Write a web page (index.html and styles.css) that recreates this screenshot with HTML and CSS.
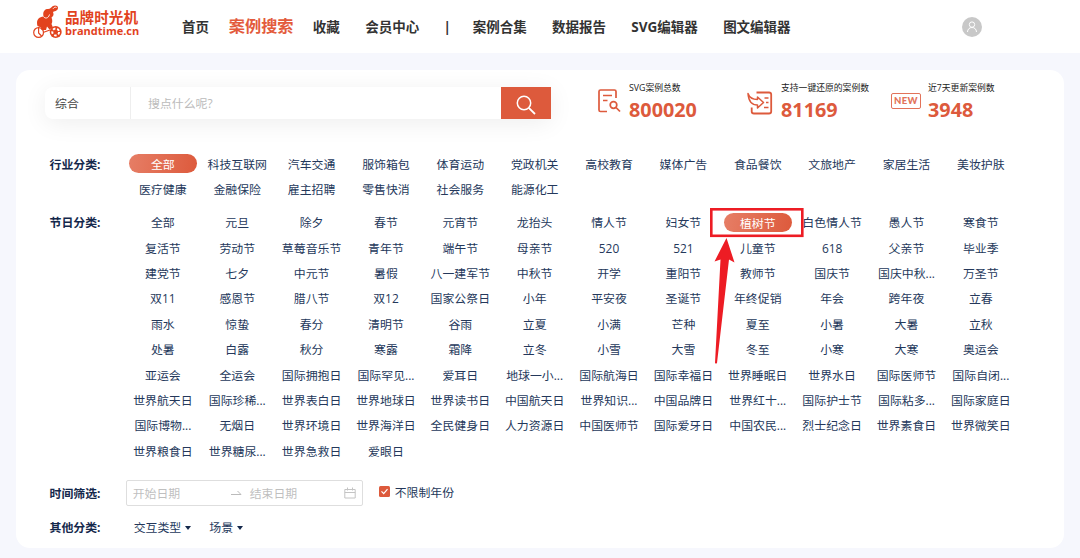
FILE: index.html
```
<!DOCTYPE html>
<html lang="zh-CN">
<head>
  <meta charset="UTF-8">
  <meta name="viewport" content="width=device-width, initial-scale=1.0">
  <title>品牌时光机 - 案例搜索</title>
  <link rel="stylesheet" href="styles.css">
</head>
<body>
  <header class="header">
    <div class="logo">
      <svg class="logo-icon" width="30" height="34" viewBox="0 0 30 34">
        <path d="M4.500 21C3 16 5 12 10.500 11.500C9.500 7 11.500 4 15 4C17.500 4 18 2.500 19.500 1.300C21.500 -.3 25 .2 25 2.800C25 5.500 22.500 6 20 7C21 9.500 20.500 11.500 18.500 12.500C19.500 15 19.500 17 18.500 19L20 22.500L16.500 24.500L14 21.500L13 25H8.500L8 22.500Z" fill="#e2431e"/>
        <path d="M10.500 11.500C12 14 15.500 13.500 16.500 9.500M20 3.800C21 2.300 22.500 1.800 23.500 2.500" fill="none" stroke="#fff" stroke-width=".9"/>
        <circle cx="5.600" cy="27.500" r="4.900" fill="none" stroke="#e2431e" stroke-width="1.200"/>
        <path d="M5.600 22V28L8.500 31M10 27.500L17 25" fill="none" stroke="#e2431e" stroke-width="1.200"/>
        <circle cx="22.700" cy="27" r="6" fill="#e2431e"/>
        <circle cx="22.700" cy="27" r="3.400" fill="none" stroke="#fff" stroke-width="2" stroke-dasharray="2.500 1.770"/>
      </svg>
      <div class="logo-text">
        <span class="logo-cn">品牌时光机</span>
        <span class="logo-en">brandtime.cn</span>
      </div>
    </div>
    <nav class="nav">
      <a>首页</a>
      <a class="active">案例搜索</a>
      <a>收藏</a>
      <a>会员中心</a>
      <a class="split">|</a>
      <a>案例合集</a>
      <a>数据报告</a>
      <a>SVG编辑器</a>
      <a>图文编辑器</a>
    </nav>
    <svg class="avatar" width="20" height="20" viewBox="0 0 20 20">
      <circle cx="10" cy="10" r="10" fill="#c8c8c8"/>
      <circle cx="10" cy="7.600" r="2.700" fill="none" stroke="#fff"/>
      <path d="M5.500 15C5.700 12 7.500 10.500 10 10.500S14.300 12 14.500 15" fill="none" stroke="#fff"/>
    </svg>
  </header>

  <main class="panel">
    <div class="top">
      <div class="search">
        <div class="search-type">综合</div>
        <div class="search-input">搜点什么呢?</div>
        <div class="search-btn">
          <svg width="20" height="20" viewBox="0 0 20 20" fill="none" stroke="#fff" stroke-width="1.500">
            <circle cx="8" cy="8" r="6.700"/>
            <path d="M12.800 12.800L19 19" stroke-width="1.800"/>
          </svg>
        </div>
      </div>
      <div class="stat stat-total">
        <svg width="23" height="24" viewBox="0 0 23 24" fill="none" stroke="#dd5a3c" stroke-width="1.700">
          <path d="M9 22.500H2.500Q1 22.500 1 21V2.500Q1 1 2.500 1H16.500Q18 1 18 2.500V9M5 6.500H14M5 11.500H9.500"/>
          <circle cx="15.500" cy="16" r="3.300"/>
          <path d="M18 18.500L22 22.500"/>
        </svg>
        <div>
          <div class="stat-name">SVG案例总数</div>
          <div class="stat-num">800020</div>
        </div>
      </div>
      <div class="stat stat-restore">
        <svg width="26" height="24" viewBox="0 0 26 24" fill="none" stroke="#dd5a3c" stroke-width="1.800">
          <path d="M9.500 1.500H22Q24.200 1.500 24.200 3.500V20.500Q24.200 22.500 22 22.500H7Q4.700 22.500 4.700 20.500V16.500"/>
          <path d="M1 2.500C2.500 7 5.500 8.500 10.500 8.500V6L16.500 11.500L10.500 17V14C5 14 1.500 10 1 2.500Z" stroke-width="1.500" stroke-linejoin="round"/>
          <path d="M17.500 7H21.500M19 11.500H21.500M17 16.500H21.500" stroke-width="1.400"/>
        </svg>
        <div>
          <div class="stat-name">支持一键还原的案例数</div>
          <div class="stat-num">81169</div>
        </div>
      </div>
      <div class="stat stat-week">
        <div class="new-icon">NEW</div>
        <div>
          <div class="stat-name">近7天更新案例数</div>
          <div class="stat-num">3948</div>
        </div>
      </div>
    </div>

    <div class="row row-industry">
      <div class="label">行业分类:</div>
      <div class="tags">
        <span class="on">全部</span><span>科技互联网</span><span>汽车交通</span><span>服饰箱包</span><span>体育运动</span><span>党政机关</span><span>高校教育</span><span>媒体广告</span><span>食品餐饮</span><span>文旅地产</span><span>家居生活</span><span>美妆护肤</span>
        <span>医疗健康</span><span>金融保险</span><span>雇主招聘</span><span>零售快消</span><span>社会服务</span><span>能源化工</span>
      </div>
    </div>

    <div class="row row-festival">
      <div class="label">节日分类:</div>
      <div class="tags">
        <span>全部</span><span>元旦</span><span>除夕</span><span>春节</span><span>元宵节</span><span>龙抬头</span><span>情人节</span><span>妇女节</span><span class="on">植树节</span><span>白色情人节</span><span>愚人节</span><span>寒食节</span>
        <span>复活节</span><span>劳动节</span><span>草莓音乐节</span><span>青年节</span><span>端午节</span><span>母亲节</span><span>520</span><span>521</span><span>儿童节</span><span>618</span><span>父亲节</span><span>毕业季</span>
        <span>建党节</span><span>七夕</span><span>中元节</span><span>暑假</span><span>八一建军节</span><span>中秋节</span><span>开学</span><span>重阳节</span><span>教师节</span><span>国庆节</span><span>国庆中秋...</span><span>万圣节</span>
        <span>双11</span><span>感恩节</span><span>腊八节</span><span>双12</span><span>国家公祭日</span><span>小年</span><span>平安夜</span><span>圣诞节</span><span>年终促销</span><span>年会</span><span>跨年夜</span><span>立春</span>
        <span>雨水</span><span>惊蛰</span><span>春分</span><span>清明节</span><span>谷雨</span><span>立夏</span><span>小满</span><span>芒种</span><span>夏至</span><span>小暑</span><span>大暑</span><span>立秋</span>
        <span>处暑</span><span>白露</span><span>秋分</span><span>寒露</span><span>霜降</span><span>立冬</span><span>小雪</span><span>大雪</span><span>冬至</span><span>小寒</span><span>大寒</span><span>奥运会</span>
        <span>亚运会</span><span>全运会</span><span>国际拥抱日</span><span>国际罕见...</span><span>爱耳日</span><span>地球一小...</span><span>国际航海日</span><span>国际幸福日</span><span>世界睡眠日</span><span>世界水日</span><span>国际医师节</span><span>国际自闭...</span>
        <span>世界航天日</span><span>国际珍稀...</span><span>世界表白日</span><span>世界地球日</span><span>世界读书日</span><span>中国航天日</span><span>世界知识...</span><span>中国品牌日</span><span>世界红十...</span><span>国际护士节</span><span>国际粘多...</span><span>国际家庭日</span>
        <span>国际博物...</span><span>无烟日</span><span>世界环境日</span><span>世界海洋日</span><span>全民健身日</span><span>人力资源日</span><span>中国医师节</span><span>国际爱牙日</span><span>中国农民...</span><span>烈士纪念日</span><span>世界素食日</span><span>世界微笑日</span>
        <span>世界粮食日</span><span>世界糖尿...</span><span>世界急救日</span><span>爱眼日</span>
      </div>
    </div>

    <div class="row row-time">
      <div class="label">时间筛选:</div>
      <div class="date-range">
        <span class="date-start">开始日期</span>
        <svg class="date-arrow" width="11" height="6" viewBox="0 0 11 6" fill="none" stroke="#bbb"><path d="M0 4.500H10L6.500 1"/></svg>
        <span class="date-end">结束日期</span>
        <svg width="12" height="12" viewBox="0 0 12 12" fill="none" stroke="#c4c4c4"><path d="M.8 2.500H11.200V11H.8ZM.8 5.500H11.200M3.500 .5V3.500M8.500 .5V3.500"/></svg>
      </div>
      <div class="check">
        <svg width="11" height="11" viewBox="0 0 11 11"><rect width="11" height="11" rx="1.500" fill="#dd5a3c"/><path d="M2.500 5.300L4.700 7.600L8.500 3.200" fill="none" stroke="#fff" stroke-width="1.200"/></svg>
        <span>不限制年份</span>
      </div>
    </div>

    <div class="row row-other">
      <div class="label">其他分类:</div>
      <div class="drop">交互类型<i class="caret"></i></div>
      <div class="drop">场景<i class="caret"></i></div>
    </div>
  </main>

  <!-- 植树节标注 -->
  <svg class="mark" width="96" height="158" viewBox="0 0 96 158">
    <rect x="2.300" y="2.300" width="91" height="26.500" fill="none" stroke="#ed1c24" stroke-width="2.600"/>
    <path d="M17.500 31L25.500 55.500L20 52.500L8 156Q7 157 6 156L11.500 52.500L5.500 54.500Z" fill="#ed1c24"/>
  </svg>
</body>
</html>
```

FILE: styles.css
```
body {
  margin: 0;
  height: 558px;
  overflow: hidden;
  position: relative;
  background: #f6f7fd;
  font-family: "Open Sans", "Noto Sans CJK SC", sans-serif;
  font-size: 11.9px;
  color: #24385b;
}
.header {
  height: 53px;
  box-sizing: border-box;
  padding-left: 33px;
  background: #fff;
  display: flex;
  align-items: flex-start;
}
.logo {
  display: flex;
  width: 149px;
  padding-top: 5px;
  color: #e2431e;
  font-weight: bold;
}
.logo-text {
  display: flex;
  flex-direction: column;
  padding: 5px 0 0 2px;
  white-space: nowrap;
}
.logo-cn {
  font-size: 14.6px;
  line-height: 15px;
}
.logo-en {
  font-family: "Open Sans", sans-serif;
  font-size: 11px;
  line-height: 11px;
}
.nav {
  display: flex;
  align-items: baseline;
  gap: 25.3px;
  width: 780px;
  height: 53px;
  line-height: 52px;
  font-size: 13.5px;
  font-weight: bold;
  color: #333;
  white-space: nowrap;
}
.nav .active {
  margin: 0 -6px 0 -5.5px;
  font-size: 16.2px;
  color: #e35b3c;
}
.nav .split {
  width: 3px;
  margin: 0 1px 0 -1px;
}
.avatar {
  margin-top: 17px;
}
.panel {
  box-sizing: border-box;
  width: 1048px;
  height: 478px;
  margin: 17px 0 0 16px;
  padding: 17px 0 0 29px;
  background: #fff;
  border-radius: 14px;
}
.top {
  display: flex;
  height: 64px;
}
.search {
  display: flex;
  width: 506px;
  height: 32px;
  line-height: 33px;
  border-radius: 8px 0 0 8px;
  background: #fff;
  box-shadow: 0 4px 24px rgba(0, 0, 0, 0.07);
}
.search-type {
  box-sizing: border-box;
  width: 86px;
  padding-left: 10px;
  border-right: 1px solid #eee;
  color: #444;
}
.search-input {
  flex: 1;
  padding-left: 17px;
  color: #bbb;
}
.search-btn {
  display: flex;
  align-items: center;
  justify-content: center;
  width: 50px;
  padding-top: 4px;
  box-sizing: border-box;
  background: #dd5a3c;
}
.stat {
  display: flex;
  white-space: nowrap;
}
.stat > svg {
  margin-top: 2px;
}
.stat-total {
  width: 102px;
  margin-left: 47px;
}
.stat-total > svg {
  margin-right: 8px;
}
.stat-total > div,
.stat-restore > div,
.stat-week > div {
  flex-shrink: 0;
}
.stat-restore {
  width: 144px;
  margin-left: 47px;
}
.stat-restore > svg {
  margin: 4px 8px 0 0;
}
.stat-name {
  margin-top: -5px;
  height: 12px;
  line-height: 12px;
  font-size: 8.8px;
  color: #222;
}
.stat-num {
  font-family: "Noto Sans", sans-serif;
  font-size: 19.8px;
  line-height: 32px;
  font-weight: bold;
  color: #dd5a3c;
}
.new-icon {
  box-sizing: border-box;
  width: 30px;
  height: 16px;
  margin: 6px 7px 0 0;
  border: 1.5px solid #e2735a;
  border-radius: 2px;
  font-family: "Lato", sans-serif;
  font-size: 9.5px;
  line-height: 14px;
  font-weight: 900;
  letter-spacing: 0.4px;
  text-align: center;
  color: #e2735a;
}
.row {
  display: flex;
  padding-left: 5px;
  line-height: 25.4px;
}
.row-industry {
  height: 59.3px;
  line-height: 26px;
}
.row-festival {
  height: 268.7px;
}
.label {
  width: 76.2px;
  margin-left: -0.5px;
  font-weight: bold;
  color: #14284b;
}
.tags {
  display: grid;
  grid-template-columns: repeat(12, 74.36px);
  grid-auto-rows: 25.4px;
  justify-items: center;
  text-align: center;
  white-space: nowrap;
}
.tags .on {
  width: 68px;
  height: 19px;
  margin-top: 3px;
  line-height: 20px;
  border-radius: 10px;
  background: linear-gradient(100deg, #e67e66, #dd5a3c);
  color: #fff;
}
.row-time {
  height: 35px;
  padding-top: 1px;
  line-height: 26px;
}
.date-range {
  display: flex;
  align-items: center;
  box-sizing: border-box;
  width: 237px;
  height: 26px;
  padding-left: 6px;
  border: 1px solid #dedede;
  border-radius: 2px;
  color: #bfbfbf;
}
.date-start {
  width: 98px;
}
.date-end {
  width: 87px;
  margin-left: 8px;
}
.date-end + svg {
  margin-left: 7px;
}
.check {
  display: flex;
  align-items: center;
  gap: 5px;
  height: 24px;
  margin-left: 16px;
}
.row-other {
  line-height: 24px;
}
.drop {
  display: flex;
  align-items: center;
  height: 24px;
  margin: 0 10px 0 8px;
}
.caret {
  margin: 2px 0 0 4px;
  border: 3.5px solid transparent;
  border-top: 4px solid #14284b;
  border-bottom: 0;
}
.mark {
  position: absolute;
  left: 709px;
  top: 207px;
}
```
